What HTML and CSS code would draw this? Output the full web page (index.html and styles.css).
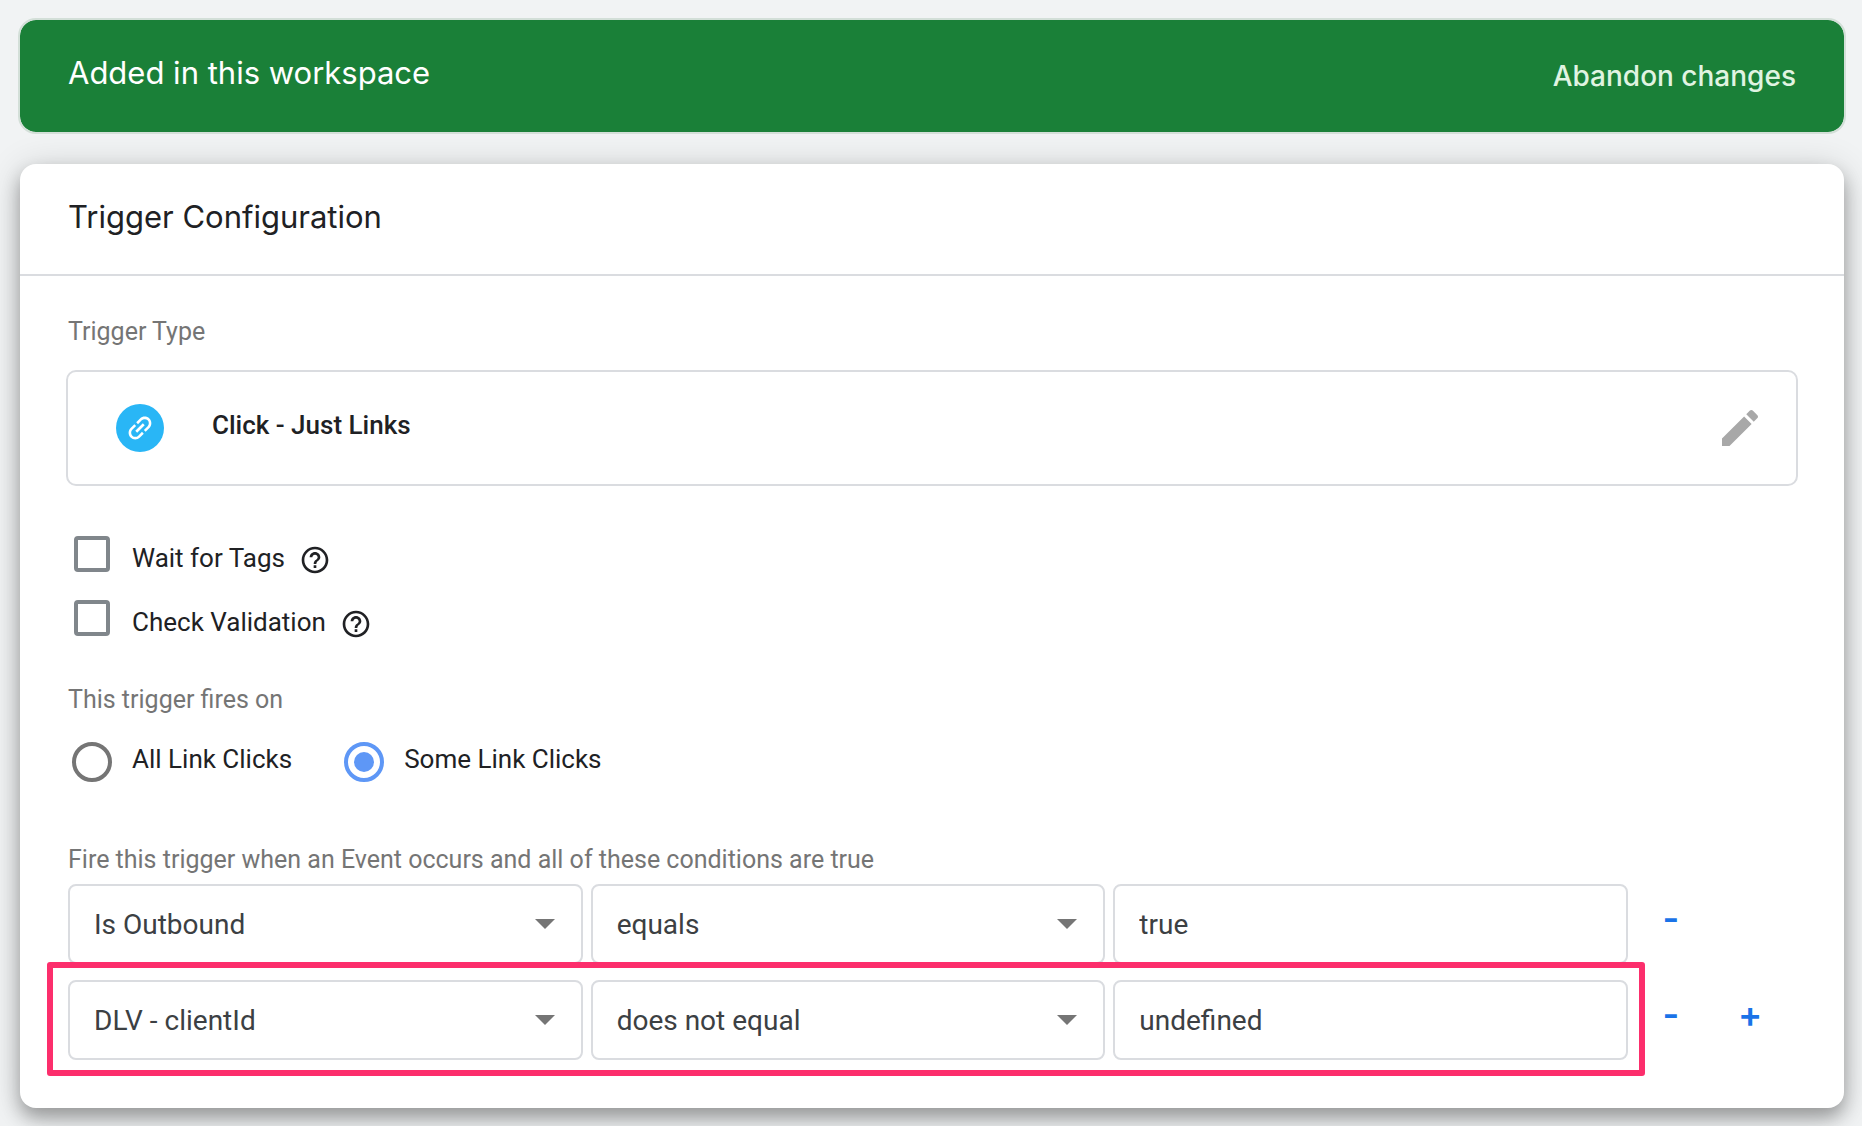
FILE: index.html
```html
<!DOCTYPE html>
<html lang="en">
<head>
<meta charset="utf-8">
<title>Trigger Configuration</title>
<link rel="stylesheet" href="styles.css">
</head>
<body>
<header class="banner">
  <p class="banner-text">Added in this workspace</p>
  <button class="banner-action" type="button">Abandon changes</button>
</header>
<main class="card">
  <div class="card-header"><h1 class="title">Trigger Configuration</h1></div>
  <form class="card-body">
    <h2 class="section-label">Trigger Type</h2>
    <div class="type-box">
      <span class="type-icon">
        <svg width="32" height="32" viewBox="0 0 24 24" fill="#fff" aria-hidden="true"><path transform="rotate(-45 12 12)" d="M3.9 12c0-1.71 1.39-3.1 3.1-3.1h4V7H7c-2.76 0-5 2.24-5 5s2.24 5 5 5h4v-1.900H7c-1.710 0-3.100-1.390-3.100-3.100zM8 13h8v-2H8v2zm9-6h-4v1.900h4c1.710 0 3.100 1.390 3.100 3.100s-1.390 3.100-3.100 3.100h-4V17h4c2.760 0 5-2.240 5-5s-2.240-5-5-5z"/></svg>
      </span>
      <span class="type-name">Click - Just Links</span>
      <button class="edit" type="button" aria-label="Edit trigger type">
        <svg width="48" height="48" viewBox="0 0 24 24" fill="#a8a8a8" aria-hidden="true"><path d="M3 17.250V21h3.750L17.810 9.940l-3.750-3.750L3 17.250zM20.710 7.040c.39-.39.39-1.020 0-1.410l-2.340-2.340c-.39-.39-1.020-.39-1.410 0l-1.830 1.830 3.750 3.750 1.830-1.830z"/></svg>
      </button>
    </div>

    <div class="checks">
      <div class="check-row">
        <input class="checkbox" type="checkbox" id="wait">
        <label class="check-label" for="wait">Wait for Tags</label>
        <button class="help" type="button" aria-label="Help: Wait for Tags"><svg width="32" height="32" viewBox="0 0 24 24" fill="#202124" aria-hidden="true"><path d="M11 18h2v-2h-2v2zm1-16C6.480 2 2 6.480 2 12s4.480 10 10 10 10-4.480 10-10S17.520 2 12 2zm0 18c-4.410 0-8-3.590-8-8s3.590-8 8-8 8 3.590 8 8-3.590 8-8 8zm0-14c-2.210 0-4 1.790-4 4h2c0-1.100.9-2 2-2s2 .9 2 2c0 2-3 1.750-3 5h2c0-2.250 3-2.500 3-5 0-2.210-1.790-4-4-4z"/></svg></button>
      </div>
      <div class="check-row">
        <input class="checkbox" type="checkbox" id="validate">
        <label class="check-label" for="validate">Check Validation</label>
        <button class="help" type="button" aria-label="Help: Check Validation"><svg width="32" height="32" viewBox="0 0 24 24" fill="#202124" aria-hidden="true"><path d="M11 18h2v-2h-2v2zm1-16C6.480 2 2 6.480 2 12s4.480 10 10 10 10-4.480 10-10S17.520 2 12 2zm0 18c-4.410 0-8-3.590-8-8s3.590-8 8-8 8 3.590 8 8-3.590 8-8 8zm0-14c-2.210 0-4 1.790-4 4h2c0-1.100.9-2 2-2s2 .9 2 2c0 2-3 1.750-3 5h2c0-2.250 3-2.500 3-5 0-2.210-1.790-4-4-4z"/></svg></button>
      </div>
    </div>

    <h2 class="section-label" id="fires-on">This trigger fires on</h2>
    <div class="radios" role="radiogroup" aria-labelledby="fires-on">
      <div class="radio-item">
        <input class="radio" type="radio" name="fires" id="all">
        <label class="radio-label" for="all">All Link Clicks</label>
      </div>
      <div class="radio-item">
        <input class="radio" type="radio" name="fires" id="some" checked>
        <label class="radio-label" for="some">Some Link Clicks</label>
      </div>
    </div>

    <h2 class="section-label">Fire this trigger when an Event occurs and all of these conditions are true</h2>
    <div class="conditions">
      <div class="condition">
        <div class="fields">
          <div class="select-wrap"><select class="field" aria-label="Variable"><option>Is Outbound</option></select></div>
          <div class="select-wrap"><select class="field" aria-label="Operator"><option>equals</option></select></div>
          <input class="field" type="text" aria-label="Value" value="true">
        </div>
        <div class="actions">
          <button class="action" type="button" aria-label="Remove condition">-</button>
        </div>
      </div>
      <div class="condition">
        <div class="fields highlighted">
          <div class="select-wrap"><select class="field" aria-label="Variable"><option>DLV - clientId</option></select></div>
          <div class="select-wrap"><select class="field" aria-label="Operator"><option>does not equal</option></select></div>
          <input class="field" type="text" aria-label="Value" value="undefined">
        </div>
        <div class="actions">
          <button class="action" type="button" aria-label="Remove condition">-</button>
          <button class="action" type="button" aria-label="Add condition">+</button>
        </div>
      </div>
    </div>
  </form>
</main>
</body>
</html>
```
FILE: styles.css
```css
* { box-sizing: border-box; }

body {
  margin: 0;
  background: #f1f3f4;
  color: #202124;
  font-family: Roboto, sans-serif;
  font-size: 26px;
  display: flow-root;
}

h1, h2, p { margin: 0; font-weight: 400; }

button {
  border: 0;
  padding: 0;
  background: none;
  font: inherit;
  color: inherit;
  cursor: pointer;
}

svg { display: block; }

.banner {
  display: flex;
  align-items: center;
  justify-content: space-between;
  min-height: 116px;
  margin: 18px 16px 30px 18px;
  padding: 0 48px;
  border: 2px solid #d3dfd8;
  border-radius: 18px;
  background: #1a8038;
  background-clip: padding-box;
}

.banner-text {
  padding-bottom: 6px;
  color: #fff;
  font-family: Inter, sans-serif;
  font-size: 31px;
  line-height: 40px;
}

.banner-action {
  color: #e0f4e2;
  font-family: Inter, sans-serif;
  font-size: 28px;
  font-weight: 500;
  line-height: 40px;
}

.card {
  margin: 0 18px 18px 20px;
  border-radius: 16px;
  background: #fff;
  box-shadow: 0 10px 18px rgba(0, 0, 0, .3), 0 4px 36px rgba(0, 0, 0, .16);
}

.card-header {
  display: flex;
  align-items: center;
  min-height: 112px;
  padding: 0 48px 4px;
  border-bottom: 2px solid #dadce0;
}

.title {
  font-family: Inter, sans-serif;
  font-size: 31px;
  line-height: 40px;
}

.card-body { padding: 40px 46px 48px 48px; }

.section-label {
  color: #757575;
  font-size: 25px;
  line-height: 32px;
}

.type-box {
  display: flex;
  align-items: center;
  gap: 48px;
  min-height: 116px;
  margin: 22px 0 50px -2px;
  padding: 0 32px 0 48px;
  border: 2px solid #dadce0;
  border-radius: 10px;
}

.type-icon {
  display: grid;
  place-items: center;
  width: 48px;
  height: 48px;
  border-radius: 50%;
  background: #29b6f6;
}

.type-name {
  flex: 1;
  padding-bottom: 6px;
  font-weight: 500;
  line-height: 32px;
}

.checks {
  display: grid;
  gap: 20px;
  margin-bottom: 40px;
}

.check-row {
  display: flex;
  padding-left: 6px;
}

.checkbox {
  appearance: none;
  width: 36px;
  height: 36px;
  margin: 0 22px 0 0;
  border: 4px solid #80868b;
  border-radius: 4px;
}

.check-label { line-height: 44px; }

.help {
  height: 32px;
  margin: 8px 0 0 14px;
}

.radios {
  display: flex;
  gap: 52px;
  margin: 26px 0 62px;
  padding-left: 4px;
}

.radio-item { display: flex; gap: 20px; }

.radio {
  appearance: none;
  display: grid;
  place-items: center;
  width: 40px;
  height: 40px;
  margin: 0;
  border: 4px solid #757575;
  border-radius: 50%;
}

.radio:checked { border-color: #5e97f6; }

.radio:checked::before {
  content: "";
  width: 20px;
  height: 20px;
  border-radius: 50%;
  background: #5e97f6;
}

.radio-label { line-height: 34px; }

.conditions {
  display: grid;
  gap: 16px;
  margin-top: 8px;
}

.condition { display: flex; }

.fields {
  flex: 1;
  display: grid;
  grid-template-columns: repeat(3, minmax(0, 1fr));
  gap: 8px;
}

.field {
  appearance: none;
  grid-area: 1 / 1;
  width: 100%;
  height: 80px;
  margin: 0;
  padding: 0 24px;
  border: 2px solid #dadce0;
  border-radius: 8px;
  background: #fff;
  color: #3c4043;
  font: 28px Roboto, sans-serif;
}

input.field { grid-area: auto; }

.select-wrap { display: grid; }

.select-wrap::after {
  content: "";
  grid-area: 1 / 1;
  place-self: center end;
  margin-right: 28px;
  border: 10px solid transparent;
  border-top-color: #757575;
  border-bottom: 0;
  pointer-events: none;
}

/* Frame drawn over the row that needs attention */
.highlighted { position: relative; }

.highlighted::after {
  content: "";
  position: absolute;
  inset: -18px -17px -16px -21px;
  border: 6px solid #fc2e6c;
  border-radius: 3px;
  pointer-events: none;
}

.actions {
  display: flex;
  align-items: center;
  gap: 31px;
  width: 170px;
  padding: 0 0 12px 19px;
}

.action {
  width: 48px;
  height: 48px;
  color: #1a73e8;
  font-family: Inter, sans-serif;
  font-size: 36px;
  font-weight: 600;
  line-height: 40px;
}
```
